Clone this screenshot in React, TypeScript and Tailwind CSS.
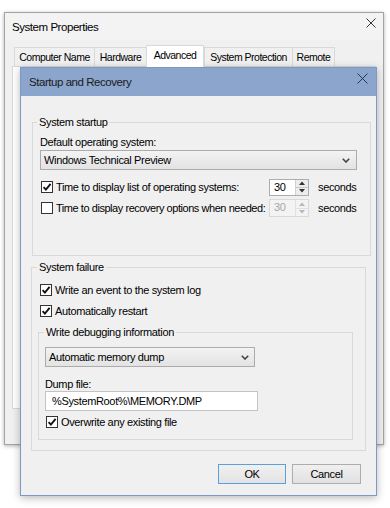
import React from "react";

const FONT = "font-['Liberation_Sans',Arial,sans-serif]";

function XIcon({ size = 10, color = "#222" }: { size?: number; color?: string }) {
  return (
    <svg width={size} height={size} viewBox={`0 0 ${size} ${size}`}>
      <path d={`M0.5 0.5 L${size - 0.5} ${size - 0.5} M${size - 0.5} 0.5 L0.5 ${size - 0.5}`} stroke={color} strokeWidth="1" fill="none" />
    </svg>
  );
}

function Check({ checked }: { checked: boolean }) {
  return (
    <span className="flex h-[12px] w-[12px] shrink-0 items-center justify-center border border-[#333333] bg-white">
      {checked && (
        <svg width="10" height="10" viewBox="0 0 10 10">
          <path d="M1.6 5.1 L3.9 7.6 L8.6 1.9" fill="none" stroke="#111111" strokeWidth="1.9" />
        </svg>
      )}
    </span>
  );
}

function Chevron() {
  return (
    <svg width="8" height="5" viewBox="0 0 8 5">
      <path d="M0.8 0.8 L4 4 L7.2 0.8" fill="none" stroke="#444444" strokeWidth="1.6" />
    </svg>
  );
}

function Spin({ disabled }: { disabled?: boolean }) {
  const tri = disabled ? "#b8b8b8" : "#333333";
  return (
    <div
      className={
        disabled
          ? "flex h-[18px] w-[40px] shrink-0 border border-[#d9d9d9] bg-[#f3f3f3]"
          : "flex h-[17px] w-[40px] shrink-0 border border-[#abadb3] bg-white"
      }
    >
      <span className={disabled ? "flex-1 pl-[4px] text-[#a6a6a6]" : "flex-1 pl-[4px] text-black"}>30</span>
      <div
        className={
          disabled
            ? "flex w-[13px] flex-col border-l border-[#e0e0e0] bg-[#f3f3f3]"
            : "flex w-[13px] flex-col border-l border-[#d0d0d0] bg-[#ececec]"
        }
      >
        <div
          className={
            disabled
              ? "flex flex-1 items-center justify-center border-b border-[#e0e0e0]"
              : "flex flex-1 items-center justify-center border-b border-[#c8c8c8]"
          }
        >
          <svg width="6" height="4" viewBox="0 0 6 4">
            <path d="M0 4 L3 0.5 L6 4 Z" fill={tri} />
          </svg>
        </div>
        <div className="flex flex-1 items-center justify-center">
          <svg width="6" height="4" viewBox="0 0 6 4">
            <path d="M0 0 L3 3.5 L6 0 Z" fill={tri} />
          </svg>
        </div>
      </div>
    </div>
  );
}

function Tab({ label, w, selected, last }: { label: string; w: string; selected?: boolean; last?: boolean }) {
  if (selected) {
    return (
      <div className={`${w} relative z-10 -mb-[1px] flex h-[22px] items-start justify-center border-l border-r border-t border-[#d9d9d9] bg-white pt-[2px] text-[10.5px] leading-[15px] tracking-[-0.5px] text-black`}>
        {label}
      </div>
    );
  }
  return (
    <div
      className={
        last
          ? `${w} flex h-[19px] items-center justify-center border-l border-r border-t border-[#d9d9d9] bg-[#f0f0f0] text-[10.5px] leading-[15px] tracking-[-0.5px] text-black`
          : `${w} flex h-[19px] items-center justify-center border-l border-t border-[#d9d9d9] bg-[#f0f0f0] text-[10.5px] leading-[15px] tracking-[-0.5px] text-black`
      }
    >
      {label}
    </div>
  );
}

function CheckRow({ checked, label, className }: { checked: boolean; label: string; className: string }) {
  return (
    <div className={`flex h-[18px] items-center ${className}`}>
      <Check checked={checked} />
      <span className="ml-[3px] whitespace-nowrap text-black">{label}</span>
    </div>
  );
}

export default function App() {
  return (
    <div className={`relative h-[508px] w-[390px] overflow-hidden bg-white text-[11px] leading-[15px] tracking-[-0.35px] ${FONT}`}>
      {/* System Properties window */}
      <div className="absolute left-[4px] top-[12px] flex h-[433px] w-[380px] flex-col border border-[#a3a3a3] bg-[#f0f0f0] shadow-[0_1px_4px_rgba(0,0,0,0.3)]">
        <div className="flex h-[27px] items-center justify-between bg-[#f3f3f3] pl-[7px] pr-[7px]">
          <span className="text-[11.5px] leading-[16px] tracking-[-0.45px] text-black">System Properties</span>
          <span className="self-start pt-[5px]">
            <XIcon size={10} color="#333" />
          </span>
        </div>
        <div className="mt-[5px] flex h-[21px] items-end pl-[9px]">
          <Tab label="Computer Name" w="w-[80px]" />
          <Tab label="Hardware" w="w-[52px]" />
          <Tab label="Advanced" w="w-[58px]" selected />
          <Tab label="System Protection" w="w-[88px]" />
          <Tab label="Remote" w="w-[43px]" last />
        </div>
        <div className="mx-[7px] h-[343px] border border-[#d9d9d9] bg-white" />
      </div>

      {/* Startup and Recovery dialog */}
      <div className="absolute left-[20px] top-[67px] flex w-[357px] flex-col border border-[#7d98c3] bg-[#f0f0f0] shadow-[0_2px_8px_rgba(0,0,0,0.28)]">
        <div className="flex h-[28px] items-center justify-between bg-[#8ba5cc] pl-[8px] pr-[8px]">
          <span className="text-[11.5px] leading-[16px] tracking-[-0.45px] text-[#1a1a1a]">Startup and Recovery</span>
          <span className="self-start pt-[5px]">
            <XIcon size={11} color="#2a3550" />
          </span>
        </div>

        <div className="flex flex-col pb-[11px] pl-[11px] pr-[10px] pt-[18px]">
          {/* System startup */}
          <fieldset className="border border-[#d9d9d9] pb-[38px] pl-[7px] pr-[13px]">
            <legend className="-ml-[3px] px-[2px] leading-[16px] text-black">System startup</legend>
            <div className="mt-[5px] text-black">Default operating system:</div>
            <div className="flex h-[20px] items-center justify-between border border-[#acacac] bg-linear-to-b from-[#f3f3f3] to-[#e3e3e3] pl-[3px] pr-[6px]">
              <span className="text-black">Windows Technical Preview</span>
              <Chevron />
            </div>
            <div className="mt-[8px] flex h-[18px] items-center">
              <div className="flex w-[229px] items-center pl-[1px]">
                <Check checked />
                <span className="ml-[3px] whitespace-nowrap text-black">Time to display list of operating systems:</span>
              </div>
              <Spin />
              <span className="ml-[9px] text-black">seconds</span>
            </div>
            <div className="mt-[3px] flex h-[18px] items-center">
              <div className="flex w-[229px] items-center pl-[1px]">
                <Check checked={false} />
                <span className="ml-[3px] whitespace-nowrap tracking-[-0.45px] text-black">Time to display recovery options when needed:</span>
              </div>
              <Spin disabled />
              <span className="ml-[9px] text-black">seconds</span>
            </div>
          </fieldset>

          {/* System failure */}
          <fieldset className="-ml-[1px] mt-[3px] border border-[#d9d9d9] pb-[10px] pl-[6px] pr-[12px]">
            <legend className="-ml-[1px] px-[2px] leading-[16px] text-black">System failure</legend>
            <CheckRow checked label="Write an event to the system log" className="ml-[2px] mt-[6px]" />
            <CheckRow checked label="Automatically restart" className="ml-[2px] mt-[3px]" />

            <fieldset className="mt-[4px] border border-[#d9d9d9] pb-[8px] pl-[6px]">
              <legend className="-ml-[1px] px-[2px] leading-[16px] text-black">Write debugging information</legend>
              <div className="mt-[7px] flex h-[20px] w-[210px] items-center justify-between border border-[#acacac] bg-linear-to-b from-[#f3f3f3] to-[#e3e3e3] pl-[3px] pr-[5px]">
                <span className="text-black">Automatic memory dump</span>
                <Chevron />
              </div>
              <div className="mt-[10px] leading-[14px] text-black">Dump file:</div>
              <div className="flex h-[20px] w-[213px] items-center border border-[#c3c3c3] bg-white pl-[6px]">
                <span className="text-black">%SystemRoot%\MEMORY.DMP</span>
              </div>
              <CheckRow checked label="Overwrite any existing file" className="ml-[1px] mt-[2px]" />
            </fieldset>
          </fieldset>

          <div className="mt-[13px] flex justify-end gap-[6px] pr-[5px]">
            <div className="flex h-[20px] w-[68px] items-center justify-center border border-[#5aa0dc] bg-linear-to-b from-[#f0f0f0] to-[#e3e3e3] text-black">
              OK
            </div>
            <div className="flex h-[20px] w-[69px] items-center justify-center border border-[#adadad] bg-linear-to-b from-[#f0f0f0] to-[#e1e1e1] text-black">
              Cancel
            </div>
          </div>
        </div>
      </div>
    </div>
  );
}
